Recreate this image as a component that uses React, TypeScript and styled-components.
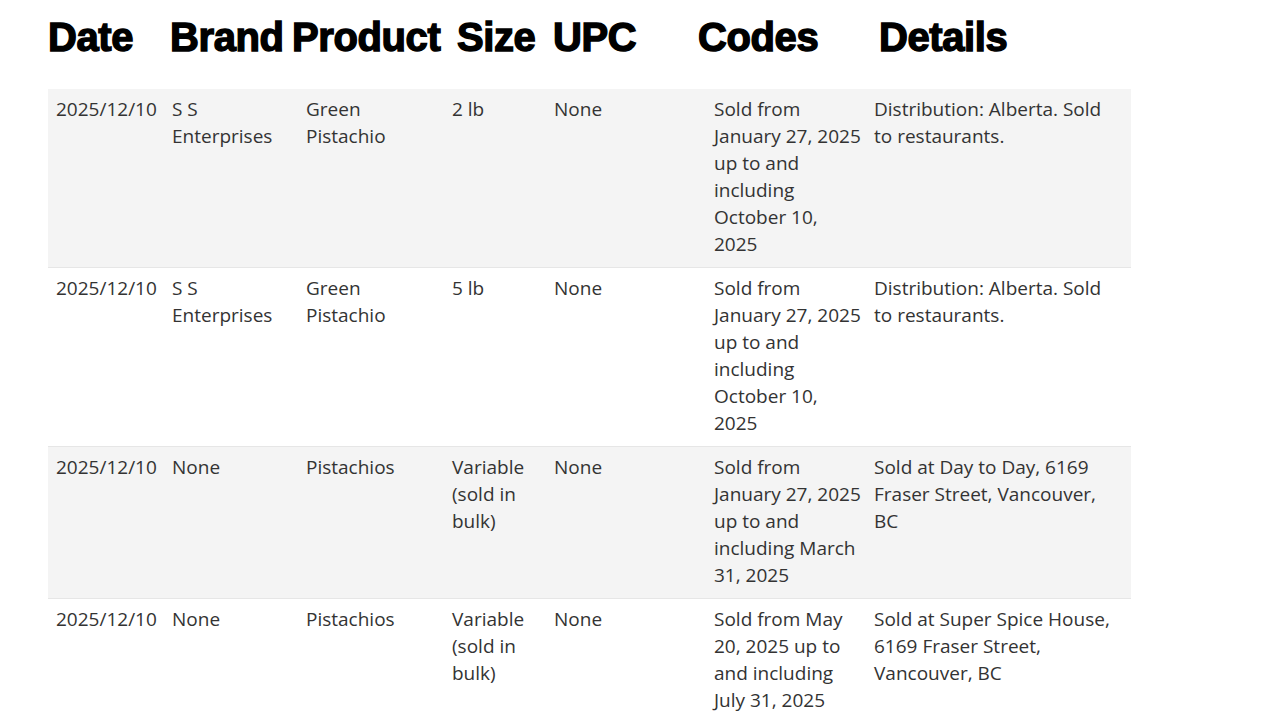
import styled, { createGlobalStyle } from "styled-components";

const GlobalStyle = createGlobalStyle`
  html, body {
    margin: 0;
    padding: 0;
    background: #ffffff;
  }
  body {
    font-family: "Open Sans", "Noto Sans", "Liberation Sans", sans-serif;
  }
`;

const Page = styled.div`
  width: 1280px;
  height: 725px;
  overflow: hidden;
  padding: 0 0 0 48px;
  box-sizing: border-box;
`;

const HeaderRow = styled.div`
  display: grid;
  grid-template-columns: 122px 122px 165px 96px 145px 181px auto;
  height: 89px;
  align-items: start;
  padding-top: 14px;
  box-sizing: border-box;
`;

const HeaderLabel = styled.div`
  font-family: "Liberation Sans", Arial, sans-serif;
  font-weight: 700;
  font-size: 40px;
  line-height: 46px;
  color: #000;
  letter-spacing: -0.4px;
  -webkit-text-stroke: 1.4px #000;
`;

const Table = styled.table`
  width: 1083px;
  border-collapse: collapse;
  table-layout: fixed;
`;

const Row = styled.tr<{ $shade: boolean }>`
  background: ${(p) => (p.$shade ? "#f4f4f4" : "#ffffff")};
  & + & {
    border-top: 1px solid #e6e6e6;
  }
`;

const Cell = styled.td<{ $padRight?: number }>`
  vertical-align: top;
  padding: 7px ${(p) => p.$padRight ?? 2}px 9px 8px;
  font-size: 19px;
  line-height: 27px;
  color: #333333;
`;

type Recall = {
  date: string;
  brand: string;
  product: string;
  size: string;
  upc: string;
  codes: string;
  details: string;
};

const rows: Recall[] = [
  {
    date: "2025/12/10",
    brand: "S S Enterprises",
    product: "Green Pistachio",
    size: "2 lb",
    upc: "None",
    codes: "Sold from January 27, 2025 up to and including October 10, 2025",
    details: "Distribution: Alberta. Sold to restaurants.",
  },
  {
    date: "2025/12/10",
    brand: "S S Enterprises",
    product: "Green Pistachio",
    size: "5 lb",
    upc: "None",
    codes: "Sold from January 27, 2025 up to and including October 10, 2025",
    details: "Distribution: Alberta. Sold to restaurants.",
  },
  {
    date: "2025/12/10",
    brand: "None",
    product: "Pistachios",
    size: "Variable (sold in bulk)",
    upc: "None",
    codes: "Sold from January 27, 2025 up to and including March 31, 2025",
    details: "Sold at Day to Day, 6169 Fraser Street, Vancouver, BC",
  },
  {
    date: "2025/12/10",
    brand: "None",
    product: "Pistachios",
    size: "Variable (sold in bulk)",
    upc: "None",
    codes: "Sold from May 20, 2025 up to and including July 31, 2025",
    details: "Sold at Super Spice House, 6169 Fraser Street, Vancouver, BC",
  },
];

const headers = ["Date", "Brand", "Product", "Size", "UPC", "Codes", "Details"];
const widths = [116, 134, 146, 102, 160, 160, 265];

export default function App() {
  return (
    <>
      <GlobalStyle />
      <Page>
        <HeaderRow>
          {headers.map((h) => (
            <HeaderLabel key={h}>{h}</HeaderLabel>
          ))}
        </HeaderRow>
        <Table>
          <colgroup>
            {widths.map((w, i) => (
              <col key={i} style={{ width: w }} />
            ))}
          </colgroup>
          <tbody>
            {rows.map((r, i) => (
              <Row key={i} $shade={i % 2 === 0}>
                <Cell>{r.date}</Cell>
                <Cell>{r.brand}</Cell>
                <Cell>{r.product}</Cell>
                <Cell>{r.size}</Cell>
                <Cell>{r.upc}</Cell>
                <Cell>{r.codes}</Cell>
                <Cell $padRight={16}>{r.details}</Cell>
              </Row>
            ))}
          </tbody>
        </Table>
      </Page>
    </>
  );
}
